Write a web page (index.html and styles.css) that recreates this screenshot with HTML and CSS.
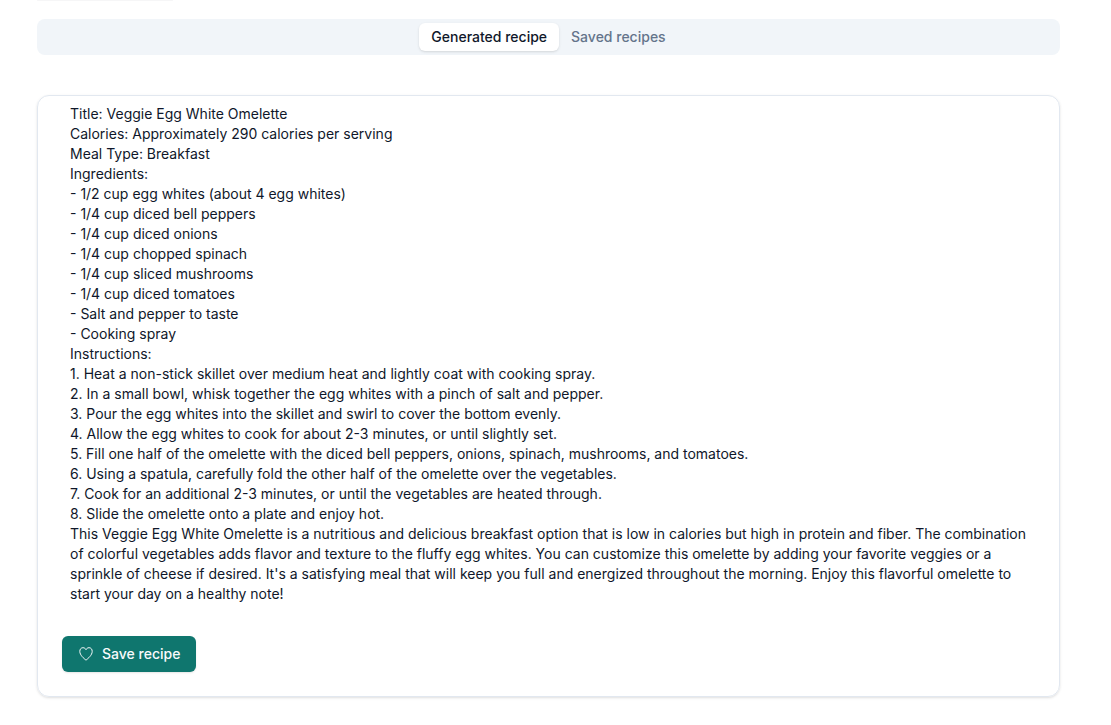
FILE: index.html
```html
<!DOCTYPE html>
<html lang="en">
<head>
<meta charset="utf-8">
<meta name="viewport" content="width=device-width, initial-scale=1">
<title>Recipe generator</title>
<link rel="stylesheet" href="styles.css">
</head>
<body>
<main class="page">
  <div class="form-edge"></div>
  <div class="tabs" role="tablist">
    <button class="tab tab-active" type="button" role="tab" aria-selected="true">Generated recipe</button>
    <button class="tab" type="button" role="tab" aria-selected="false">Saved recipes</button>
  </div>
  <section class="card">
    <div class="recipe">Title: Veggie Egg White Omelette
Calories: Approximately 290 calories per serving
Meal Type: Breakfast
Ingredients:
- 1/2 cup egg whites (about 4 egg whites)
- 1/4 cup diced bell peppers
- 1/4 cup diced onions
- 1/4 cup chopped spinach
- 1/4 cup sliced mushrooms
- 1/4 cup diced tomatoes
- Salt and pepper to taste
- Cooking spray
Instructions:
1. Heat a non-stick skillet over medium heat and lightly coat with cooking spray.
2. In a small bowl, whisk together the egg whites with a pinch of salt and pepper.
3. Pour the egg whites into the skillet and swirl to cover the bottom evenly.
4. Allow the egg whites to cook for about 2-3 minutes, or until slightly set.
5. Fill one half of the omelette with the diced bell peppers, onions, spinach, mushrooms, and tomatoes.
6. Using a spatula, carefully fold the other half of the omelette over the vegetables.
7. Cook for an additional 2-3 minutes, or until the vegetables are heated through.
8. Slide the omelette onto a plate and enjoy hot.
This Veggie Egg White Omelette is a nutritious and delicious breakfast option that is low in calories but high in protein and fiber. The combination of colorful vegetables adds flavor and texture to the fluffy egg whites. You can customize this omelette by adding your favorite veggies or a sprinkle of cheese if desired. It's a satisfying meal that will keep you full and energized throughout the morning. Enjoy this flavorful omelette to start your day on a healthy note!</div>
    <button class="save" type="button">
      <svg class="save-icon" viewBox="0 0 16 16" fill="none" stroke="currentColor" stroke-linejoin="round" aria-hidden="true"><path d="M8 14.2C6 12.5 1.8 9.2 1.8 5.4C1.8 3.2 3.1 1.7 4.9 1.7C6.4 1.7 7.5 2.6 8 3.6C8.5 2.6 9.6 1.7 11.1 1.7C12.9 1.7 14.2 3.2 14.2 5.4C14.2 9.2 10 12.5 8 14.2Z"/></svg>
      Save recipe
    </button>
  </section>
</main>
</body>
</html>
```
FILE: styles.css
```css
* {
  box-sizing: border-box;
}

body {
  margin: 0;
  background: #fff;
  color: #0f172a;
  font-family: Inter, "Liberation Sans", sans-serif;
  font-size: 14px;
  line-height: 20px;
}

button {
  border: 0;
  font: inherit;
  font-weight: 500;
  cursor: pointer;
}

.page {
  display: flex;
  flex-direction: column;
  padding: 0 51px 28px 37px;
}

.form-edge {
  width: 136px;
  height: 1px;
  margin-bottom: 18px;
  border-radius: 1px;
  background: #f6f6f7;
}

.tabs {
  display: flex;
  align-items: center;
  justify-content: center;
  height: 36px;
  margin-bottom: 40px;
  padding: 4px;
  border-radius: 8px;
  background: #f1f5f9;
}

.tab {
  padding: 4px 12px;
  border-radius: 6px;
  background: transparent;
  color: #64748b;
}

.tab-active {
  background: #fff;
  color: #0f172a;
  box-shadow: 0 1px 3px rgb(0 0 0 / 10%), 0 1px 2px -1px rgb(0 0 0 / 10%);
}

.card {
  padding: 8px 24px 24px;
  border: 1px solid #e2e8f0;
  border-radius: 12px;
  box-shadow: 0 1px 3px rgb(0 0 0 / 10%), 0 1px 2px -1px rgb(0 0 0 / 10%);
}

.recipe {
  margin-bottom: 32px;
  padding: 0 8px;
  white-space: pre-line;
}

.save {
  display: inline-flex;
  align-items: center;
  gap: 8px;
  height: 36px;
  padding: 8px 16px;
  border-radius: 6px;
  background: #0f766e;
  color: #f8fafc;
  box-shadow: 0 1px 2px rgb(0 0 0 / 10%);
}

.save-icon {
  width: 16px;
  height: 16px;
}
```
